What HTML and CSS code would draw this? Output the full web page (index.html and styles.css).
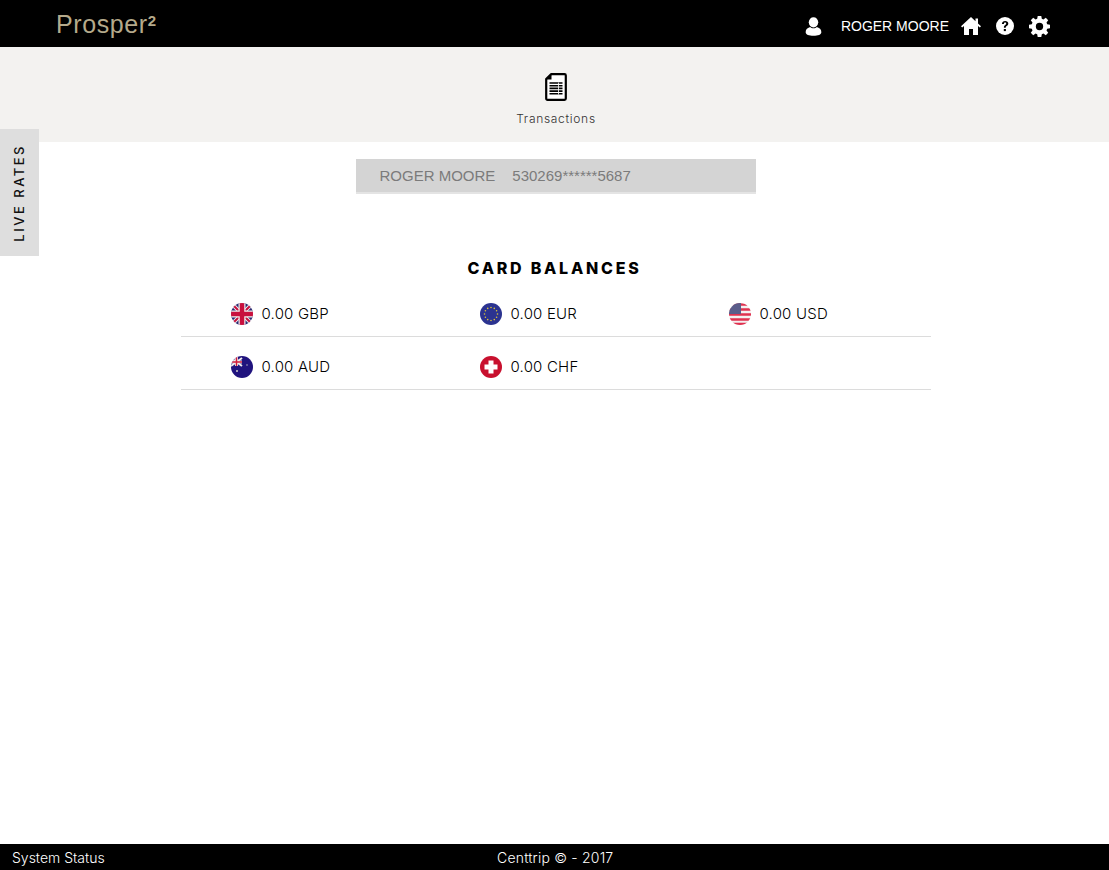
FILE: index.html
```html
<!DOCTYPE html>
<html lang="en">

<head>
  <meta charset="UTF-8">
  <title>Prosper2</title>
  <link rel="stylesheet" href="styles.css">
</head>

<body>
  <div class="header">
    <div class="logo">Prosper<span class="logo-sup">2</span></div>
    <div class="user-nav">
      <svg class="icon-user" viewBox="0 0 18 20" width="17" height="19">
        <ellipse cx="9" cy="5.600" rx="5" ry="5.400" fill="#fff" />
        <path d="M5.400 10.400C2 11.400.7 13.400.7 16c0 2.600 3.600 3.800 8.300 3.800s8.300-1.200 8.300-3.800c0-2.600-1.300-4.600-4.700-5.600-1 .9-2.200 1.400-3.600 1.400s-2.600-.5-3.600-1.400z" fill="#fff" />
      </svg>
      <span class="user-name">ROGER MOORE</span>
      <svg class="icon-home" viewBox="0 0 20 18" width="20" height="18">
        <path d="M10 0L0 9.300l1.200 1.200L3 8.900V18h5v-6h4v6h5V8.900l1.800 1.600L20 9.300l-3-2.800V1.500h-2.500v2.700z" fill="#fff" />
      </svg>
      <svg class="icon-help" viewBox="0 0 18 18" width="18" height="18">
        <circle cx="9" cy="9" r="9" fill="#fff" />
        <path d="M5.900 6.900C6 5 7.300 3.900 9.200 3.900c1.800 0 3.100 1.100 3.100 2.700 0 1.200-.6 1.800-1.500 2.400-.8.500-1 .8-1 1.500v.3H7.900v-.5c0-1.100.4-1.700 1.300-2.300.7-.5 1-.8 1-1.400 0-.6-.4-1-1.100-1-.7 0-1.100.5-1.200 1.300z" fill="#000" />
        <rect x="7.800" y="12" width="2.100" height="2.100" fill="#000" />
      </svg>
      <svg class="icon-gear" viewBox="0 0 20 20" width="21" height="21">
        <path fill-rule="evenodd" d="M8.300 0h3.400l.5 2.700 1.500.6L16 1.700l2.300 2.300-1.600 2.300.6 1.500 2.700.5v3.400l-2.700.5-.6 1.500 1.600 2.300-2.300 2.300-2.300-1.600-1.500.6-.5 2.700H8.300l-.5-2.700-1.500-.6L4 18.300 1.700 16l1.600-2.300-.6-1.500L0 11.700V8.300l2.700-.5.6-1.500L1.700 4 4 1.700l2.300 1.600 1.500-.6zM10 6.500a3.500 3.500 0 1 0 0 7 3.500 3.500 0 0 0 0-7z" fill="#fff" />
      </svg>
    </div>
  </div>

  <div class="subnav">
    <svg class="icon-doc" viewBox="0 0 22 28" width="22" height="28">
      <path d="M6 1.200h13.500c.7 0 1.300.6 1.300 1.300v23c0 .7-.6 1.300-1.300 1.300h-17c-.7 0-1.300-.6-1.300-1.300V6z" fill="#fff" stroke="#000" stroke-width="2.200" stroke-linejoin="round" />
      <path d="M1.500 6.500h5v-5z" fill="#000" />
      <path d="M4.500 10h13M4.500 12.700h13M4.500 15.400h13M4.500 18.100h13M4.500 20.800h13" stroke="#000" stroke-width="1.600" />
      <path d="M13.500 9.500v12" stroke="#fff" stroke-width=".8" />
    </svg>
    <div class="subnav-label">Transactions</div>
  </div>

  <div class="live-rates"><span>LIVE RATES</span></div>

  <div class="content">
    <div class="card-select">
      <span class="card-holder">ROGER MOORE</span>
      <span>530269******5687</span>
    </div>

    <h2 class="balances-title">CARD BALANCES</h2>

    <div class="balances">
      <div class="balance">
        <svg class="flag" viewBox="0 0 22 22" width="22" height="22">
          <defs>
            <clipPath id="c1"><circle cx="11" cy="11" r="11" /></clipPath>
          </defs>
          <g clip-path="url(#c1)">
            <rect width="22" height="22" fill="#2b2a72" />
            <path d="M0 0L22 22M22 0L0 22" stroke="#eee" stroke-width="4" />
            <path d="M0 0L22 22M22 0L0 22" stroke="#c8103e" stroke-width="2" />
            <path d="M11 0V22M0 11H22" stroke="#eee" stroke-width="7" />
            <path d="M11 0V22M0 11H22" stroke="#c8103e" stroke-width="4.500" />
          </g>
        </svg>
        <span>0.00 GBP</span>
      </div>
      <div class="balance">
        <svg class="flag" viewBox="0 0 22 22" width="22" height="22">
          <circle cx="11" cy="11" r="11" fill="#2b3390" />
          <g fill="#d9c23c">
            <circle cx="11" cy="4.500" r=".8" /><circle cx="14.300" cy="5.400" r=".8" /><circle cx="16.600" cy="7.700" r=".8" />
            <circle cx="17.500" cy="11" r=".8" /><circle cx="16.600" cy="14.300" r=".8" /><circle cx="14.300" cy="16.600" r=".8" />
            <circle cx="11" cy="17.500" r=".8" /><circle cx="7.700" cy="16.600" r=".8" /><circle cx="5.400" cy="14.300" r=".8" />
            <circle cx="4.500" cy="11" r=".8" /><circle cx="5.400" cy="7.700" r=".8" /><circle cx="7.700" cy="5.400" r=".8" />
          </g>
        </svg>
        <span>0.00 EUR</span>
      </div>
      <div class="balance">
        <svg class="flag" viewBox="0 0 22 22" width="22" height="22">
          <defs>
            <clipPath id="c2"><circle cx="11" cy="11" r="11" /></clipPath>
          </defs>
          <g clip-path="url(#c2)">
            <rect width="22" height="22" fill="#f4f0f0" />
            <path d="M0 1.500H22M0 6.500H22M0 11.500H22M0 16.500H22M0 21H22" stroke="#e0314f" stroke-width="2.300" />
            <rect width="12" height="11" fill="#5a5d8a" />
          </g>
        </svg>
        <span>0.00 USD</span>
      </div>
      <div class="balance">
        <svg class="flag" viewBox="0 0 22 22" width="22" height="22">
          <defs>
            <clipPath id="c3"><circle cx="11" cy="11" r="11" /></clipPath>
          </defs>
          <g clip-path="url(#c3)">
            <rect width="22" height="22" fill="#20137e" />
            <path d="M0 2L11 10M11 2L0 10" stroke="#eee" stroke-width="2" />
            <path d="M0 6H11M5.500 0V10" stroke="#eee" stroke-width="3" />
            <path d="M0 6H11M5.500 0V10" stroke="#d01c3c" stroke-width="1.500" />
            <circle cx="6" cy="15" r="1" fill="#ccc" />
            <circle cx="16" cy="9" r=".7" fill="#ccc" />
          </g>
        </svg>
        <span>0.00 AUD</span>
      </div>
      <div class="balance">
        <svg class="flag" viewBox="0 0 22 22" width="22" height="22">
          <circle cx="11" cy="11" r="11" fill="#c8102e" />
          <path d="M8.500 4.500h5v4h4v5h-4v4h-5v-4h-4v-5h4z" fill="#fff" />
        </svg>
        <span>0.00 CHF</span>
      </div>
      <div class="balance balance-empty"></div>
    </div>
  </div>

  <div class="footer">
    <span class="footer-status">System Status</span>
    <span class="footer-copy">Centtrip © - 2017</span>
  </div>
</body>

</html>
```

FILE: styles.css
```css
* {
  box-sizing: border-box;
}

body {
  margin: 0;
  padding: 0;
  min-height: 100vh;
  display: flex;
  flex-direction: column;
  background-color: #fff;
  font-family: Inter, Lato, sans-serif;
  color: #000;
}

.header {
  height: 47px;
  background-color: #000;
  display: flex;
  align-items: center;
  justify-content: space-between;
  padding: 5px 59px 0 56px;
}

.logo {
  font-family: "Liberation Sans", Arial, sans-serif;
  font-size: 25px;
  letter-spacing: 0.6px;
  color: #b5aa8b;
  margin-top: -3px;
}

.logo-sup {
  font-size: 15px;
  font-weight: bold;
  vertical-align: 7px;
  line-height: 0;
}

.user-nav {
  display: flex;
  align-items: center;
}

.icon-user {
  margin-right: 19px;
}

.user-name {
  font-family: "Liberation Sans", Arial, sans-serif;
  font-size: 14px;
  color: #fff;
  margin-right: 12px;
}

.icon-home {
  margin-right: 15px;
}

.icon-help {
  margin-right: 15px;
}

.subnav {
  height: 95px;
  background-color: #f3f2f0;
  display: flex;
  flex-direction: column;
  align-items: center;
  padding-top: 26px;
  padding-left: 3px;
}

.subnav-label {
  font-size: 12px;
  font-weight: 300;
  letter-spacing: 0.7px;
  color: #333;
  margin-top: 10px;
}

.live-rates {
  position: absolute;
  left: 0;
  top: 129px;
  width: 39px;
  height: 127px;
  background-color: #dedede;
  display: flex;
  align-items: center;
  justify-content: center;
}

.live-rates span {
  writing-mode: vertical-rl;
  transform: rotate(180deg);
  font-size: 13px;
  font-weight: 500;
  letter-spacing: 2.500px;
  color: #111;
  margin-right: 2px;
}

.content {
  flex: 1;
  display: flex;
  flex-direction: column;
  align-items: center;
  padding-top: 17px;
}

.card-select {
  width: 400px;
  height: 35px;
  margin-left: 2px;
  background-color: #d4d4d4;
  border-bottom: 2px solid #e4e4e4;
  padding-left: 24px;
  display: flex;
  align-items: center;
  gap: 17px;
  font-family: "Liberation Sans", Arial, sans-serif;
  font-size: 15px;
  color: #7b7b7b;
}

.balances-title {
  margin: 64px 0 0;
  font-size: 16px;
  line-height: 20px;
  font-weight: 800;
  letter-spacing: 2.750px;
}

.balances {
  width: 750px;
  margin-left: 2px;
  margin-top: 6px;
  display: grid;
  grid-template-columns: 249px 249px 252px;
}

.balance {
  height: 53px;
  display: flex;
  align-items: center;
  gap: 9px;
  padding-top: 6px;
  padding-left: 50px;
  border-bottom: 1px solid #dcdcdc;
  font-size: 15px;
  font-weight: 300;
  letter-spacing: 0.2px;
}

.flag {
  flex-shrink: 0;
  margin-top: 2px;
}

.footer {
  height: 26px;
  background-color: #000;
  color: #fff;
  font-size: 14px;
  font-weight: 300;
  display: flex;
  align-items: center;
  padding-top: 1px;
  padding-left: 12px;
}

.footer-status {
  width: 485px;
}

.footer-copy {
  letter-spacing: 0.2px;
}
```
